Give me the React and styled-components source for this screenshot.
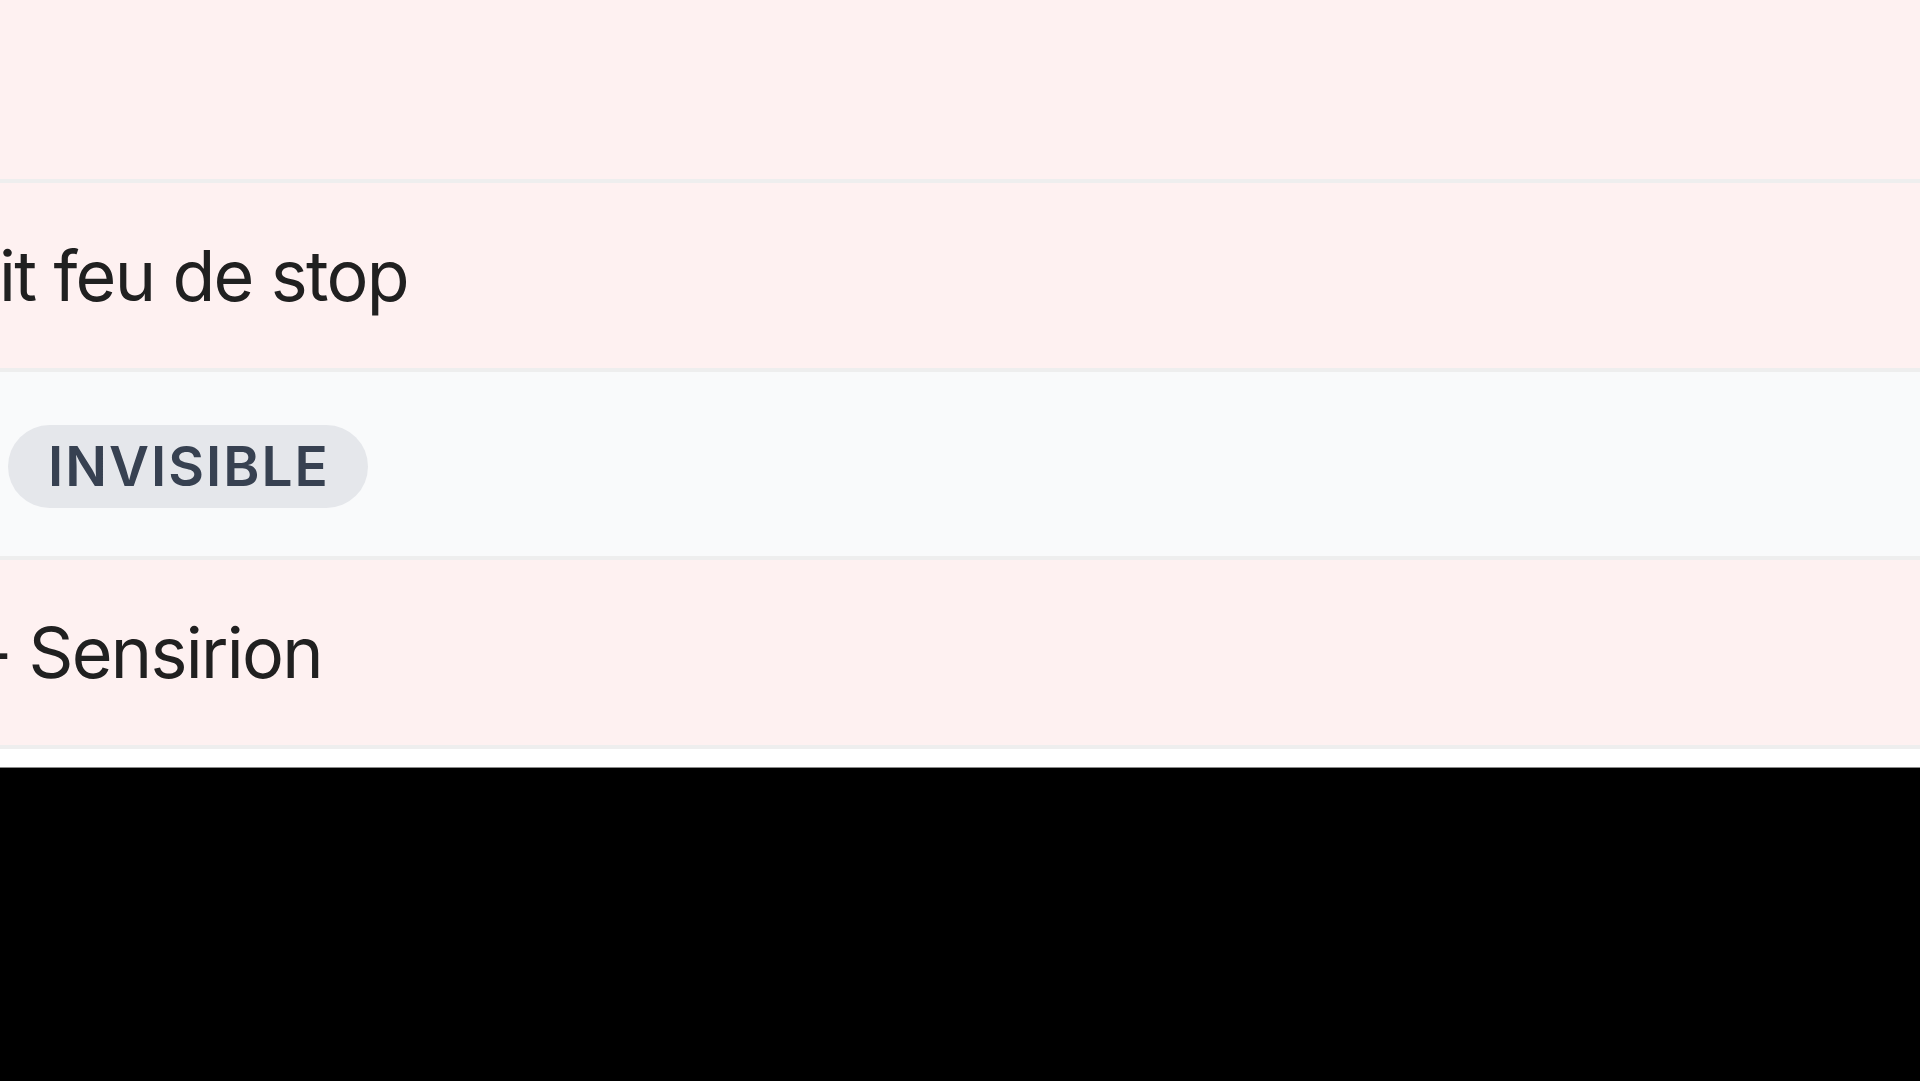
import React from "react";
import styled, {createGlobalStyle} from "styled-components";

const GlobalStyle = createGlobalStyle`
    html, body {
        margin: 0;
        padding: 0;
        background: #000;
        overflow: hidden;
    }
    body {
        font-family: Inter, "Noto Sans", "Liberation Sans", sans-serif;
    }
`;

const Page = styled.div`
    width: 1920px;
    height: 1081px;
    display: flex;
    flex-direction: column;
    background: #000;
    overflow: hidden;
`;

const Sheet = styled.div`
    background: #fff;
    padding-bottom: 18px;
    border-bottom: 1px solid #8a8a8a;
    margin-top: -5.5px;
`;

const Row = styled.div`
    height: 184.5px;
    display: flex;
    align-items: center;
    background: ${p => (p.$muted ? "#f9fafb" : "#fef1f1")};
    border-bottom: 4.5px solid #eeeeee;
    overflow: hidden;
`;

const Cell = styled.div`
    font-size: 70px;
    letter-spacing: -1.7px;
    color: #202020;
    white-space: nowrap;
    margin-left: ${p => p.$shift || 0}px;
`;

const Badge = styled.span`
    display: inline-flex;
    align-items: center;
    height: 83px;
    margin-left: 8px;
    margin-top: 5px;
    padding: 0 38px 0 40px;
    border-radius: 42px;
    background: #e5e7eb;
    color: #374151;
    font-size: 55px;
    font-weight: 600;
    letter-spacing: 2px;
    text-transform: uppercase;
`;

export default function App() {
    return (
        <Page>
            <GlobalStyle/>
            <Sheet>
                <Row/>
                <Row>
                    <Cell $shift={-1}>it feu de stop</Cell>
                </Row>
                <Row $muted>
                    <Badge>Invisible</Badge>
                </Row>
                <Row>
                    <Cell $shift={-20}>- Sensirion</Cell>
                </Row>
            </Sheet>
        </Page>
    );
}
